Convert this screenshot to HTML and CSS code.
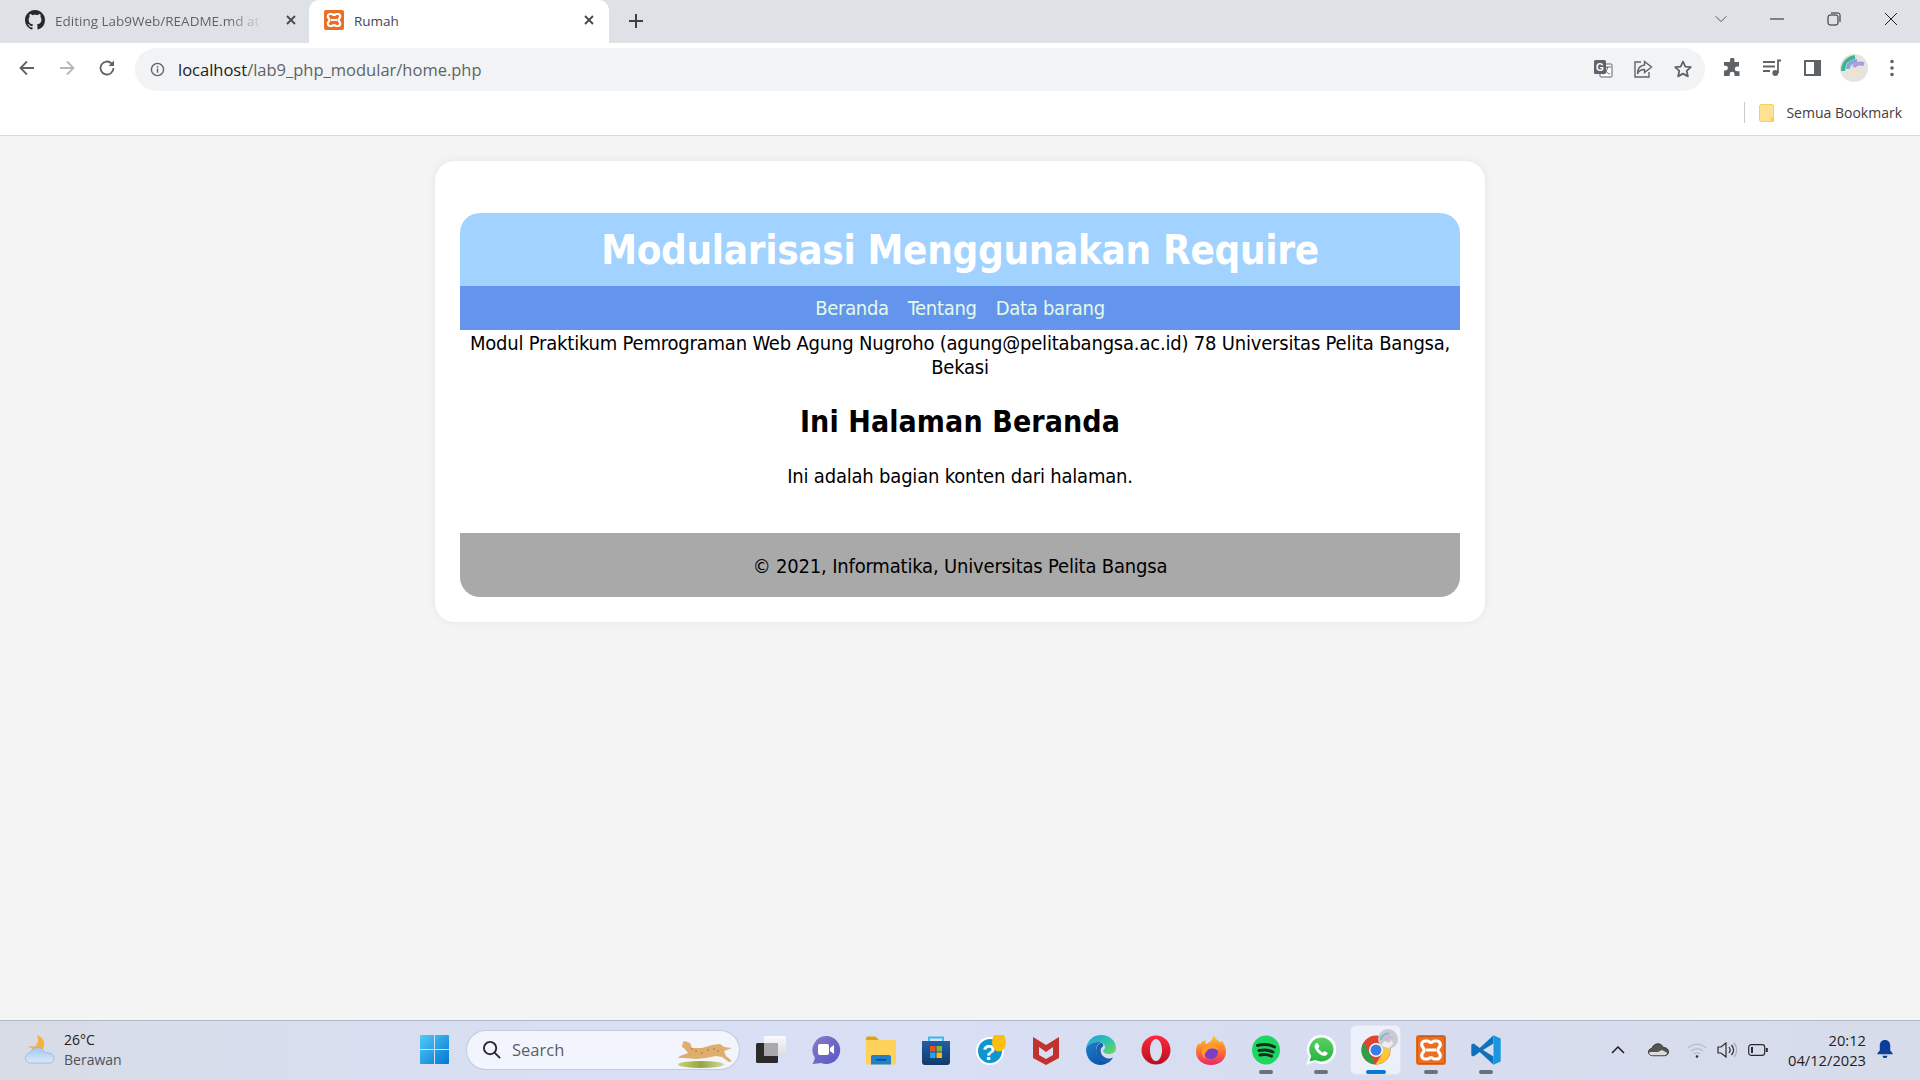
FILE: index.html
```html
<!DOCTYPE html>
<html lang="id">
<head>
  <meta charset="UTF-8">
  <meta name="viewport" content="width=device-width, initial-scale=1.0">
  <title>Rumah</title>
  <link rel="stylesheet" href="styles.css">
</head>
<body>
  <div class="screen">
    <!-- Tab strip -->
    <div class="tabstrip">
      <div class="tab">
        <svg class="favicon" viewBox="0 0 16 16"><path fill="#24292f" d="M8 0C3.58 0 0 3.58 0 8c0 3.54 2.29 6.53 5.47 7.59.4.07.55-.17.55-.38 0-.19-.01-.82-.01-1.49-2.01.37-2.53-.49-2.69-.94-.09-.23-.48-.94-.82-1.13-.28-.15-.68-.52-.01-.53.63-.01 1.08.58 1.23.82.72 1.21 1.87.87 2.33.66.07-.52.28-.87.51-1.07-1.78-.2-3.64-.89-3.64-3.95 0-.87.31-1.59.82-2.15-.08-.2-.36-1.02.08-2.12 0 0 .67-.21 2.2.82.64-.18 1.32-.27 2-.27s1.36.09 2 .27c1.53-1.04 2.2-.82 2.2-.82.44 1.1.16 1.92.08 2.12.51.56.82 1.27.82 2.15 0 3.07-1.87 3.75-3.65 3.95.29.25.54.73.54 1.48 0 1.07-.01 1.93-.01 2.2 0 .21.15.46.55.38A8 8 0 0 0 16 8c0-4.42-3.58-8-8-8z"/></svg>
        <span class="tab-title tab-title-fade">Editing Lab9Web/README.md at</span>
        <svg class="tab-close" viewBox="0 0 12 12"><path d="M2 2l8 8M10 2l-8 8"/></svg>
      </div>
      <div class="tab tab-active">
        <svg class="favicon" viewBox="0 0 20 20"><rect width="20" height="20" rx="2" fill="#ea6f26"/><path fill="none" stroke="#fff" stroke-width="2.2" d="M6 4h1.6c1 0 1.4 1 2.4 1s1.4-1 2.4-1H14c1.5 0 2.2 1.3 2.2 2.5 0 1.5-1.7 2-1.7 3.5s1.7 2 1.7 3.5c0 1.2-.7 2.5-2.2 2.5h-1.6c-1 0-1.4-1-2.4-1s-1.4 1-2.4 1H6c-1.5 0-2.2-1.3-2.2-2.5 0-1.500 1.700-2 1.700-3.500S3.800 8 3.800 6.500C3.800 5.300 4.500 4 6 4zM7 10h6"/></svg>
        <span class="tab-title">Rumah</span>
        <svg class="tab-close" viewBox="0 0 12 12"><path d="M2 2l8 8M10 2l-8 8"/></svg>
      </div>
      <svg class="new-tab" viewBox="0 0 16 16"><path d="M8 1v14M1 8h14"/></svg>
      <div class="window-controls">
        <svg class="win-btn" viewBox="0 0 16 16"><path d="M2 5l6 6 6-6"/></svg>
        <svg class="win-btn" viewBox="0 0 16 16"><path d="M1 8h14"/></svg>
        <svg class="win-btn" viewBox="0 0 16 16"><rect x="2" y="4" width="10" height="10" rx="2"/><path d="M5 2h7c1.5 0 2 1 2 2v7"/></svg>
        <svg class="win-btn" viewBox="0 0 16 16"><path d="M2 2l12 12M14 2L2 14"/></svg>
      </div>
    </div>

    <!-- Address bar -->
    <div class="toolbar">
      <svg class="nav-icon" viewBox="0 0 20 20"><path d="M17 10H4M10 3.5L3.5 10l6.5 6.500"/></svg>
      <svg class="nav-icon nav-disabled" viewBox="0 0 20 20"><path d="M3 10h13M10 3.5l6.500 6.500-6.500 6.500"/></svg>
      <svg class="nav-icon" viewBox="0 0 20 20"><path d="M16.5 10a6.5 6.5 0 1 1-2-4.700L16.500 7.500"/><path class="solid" d="M17 2.5V8h-5.500z"/></svg>
      <div class="omnibox">
        <svg class="info-icon" viewBox="0 0 16 16"><circle cx="8" cy="8" r="6.5"/><path d="M8 7v4.500M8 4.200v1.600"/></svg>
        <span class="url"><span class="url-host">localhost</span>/lab9_php_modular/home.php</span>
        <div class="omni-actions">
          <svg class="tool-icon" viewBox="0 0 20 20"><rect x="7" y="5" width="12" height="13" rx="1" fill="#fff" stroke="#5f6368"/><rect x="1" y="1" width="12" height="14" rx="1.5" fill="#5f6368"/><text x="7" y="12" class="translate-g">G</text><path d="M11 8h7M14.500 8c0 3-2 6-4 7M12 11c1 2 3 3.500 5 4" stroke="#5f6368" stroke-width="1" fill="none"/></svg>
          <svg class="tool-icon" viewBox="0 0 20 20"><path fill="none" stroke="#5f6368" stroke-width="1.4" d="M8 3H2v15h14v-5M11.500 2.500l7 5.500-7 5.500V10.500C7.500 10.500 5.500 12 4.500 15c0-5 2.500-8.500 7-9z"/></svg>
          <svg class="tool-icon" viewBox="0 0 20 20"><path fill="none" stroke="#5f6368" stroke-width="1.8" stroke-linejoin="round" d="M10 2.500l2.300 5.100 5.500.6-4.100 3.700 1.200 5.500L10 14.600l-4.900 2.800 1.200-5.500-4.100-3.700 5.500-.6z"/></svg>
        </div>
      </div>
      <div class="tool-actions">
        <svg class="tool-icon" viewBox="0 0 20 20"><path fill="#5f6368" d="M8 1.500a2.300 2.300 0 0 1 4.500 0V4H17v4.500h-1.800a2.400 2.400 0 0 0 0 4.800H17.500V18h-5v-1.800a2.400 2.400 0 0 0-4.800 0V18H2v-5.500h1.500a2.400 2.400 0 0 0 0-4.800H2V4h6z"/></svg>
        <svg class="tool-icon" viewBox="0 0 20 20"><path fill="none" stroke="#5f6368" stroke-width="1.8" d="M1 4h12M1 8.500h12M1 13h7M16 15V2.500h3"/><circle cx="13.300" cy="15" r="3" fill="#5f6368"/></svg>
        <svg class="tool-icon" viewBox="0 0 20 20"><rect x="2" y="2" width="17" height="16" fill="#5f6368"/><rect x="4" y="4" width="8" height="12" fill="#fff"/></svg>
        <svg class="avatar" viewBox="0 0 28 28">
          <circle cx="14" cy="14" r="14" fill="#e4e4e2"/>
          <path fill="none" stroke="#3fb58f" stroke-width="4" d="M3 17C3 9 8 4 15 3"/>
          <path fill="none" stroke="#86a5e3" stroke-width="4" d="M8 15c0-5 4-8 9-8"/>
          <path fill="none" stroke="#b39bdb" stroke-width="4" d="M14 13c1-3 5-4 10-3"/>
          <path fill="#efe3c9" d="M6 22l4-7 7 1 4-3 1 3-3 3-1 5-3-3-5 1z"/>
        </svg>
        <svg class="tool-icon" viewBox="0 0 20 20"><g fill="#5f6368"><circle cx="10" cy="3.5" r="1.8"/><circle cx="10" cy="10" r="1.8"/><circle cx="10" cy="16.5" r="1.8"/></g></svg>
      </div>
    </div>

    <!-- Bookmark bar -->
    <div class="bookmarks">
      <span class="bm-sep"></span>
      <svg class="bm-folder" viewBox="0 0 15 18"><path fill="#fde293" stroke="#f4cf63" d="M2 .5h11c.8 0 1.500.7 1.500 1.500v15.500H2c-.8 0-1.500-.7-1.500-1.500V2C.5 1.200 1.200.5 2 .5z"/><rect x="11.5" y="13" width="3" height="4.5" rx="1" fill="#fbd251"/></svg>
      <span class="bm-label">Semua Bookmark</span>
    </div>

    <!-- Page -->
    <main class="page">
      <div class="card">
        <header class="site-header">
          <h1>Modularisasi Menggunakan Require</h1>
        </header>
        <nav class="site-nav">
          <a href="#">Beranda</a>
          <a href="#">Tentang</a>
          <a href="#">Data barang</a>
        </nav>
        <p class="intro">Modul Praktikum Pemrograman Web Agung Nugroho (agung@pelitabangsa.ac.id) 78 Universitas Pelita Bangsa, Bekasi</p>
        <section class="content">
          <h2>Ini Halaman Beranda</h2>
          <p>Ini adalah bagian konten dari halaman.</p>
        </section>
        <footer class="site-footer">&copy; 2021, Informatika, Universitas Pelita Bangsa</footer>
      </div>
    </main>

    <!-- Taskbar -->
    <div class="taskbar">
      <div class="weather">
        <svg class="weather-icon" viewBox="0 0 30 30">
          <defs><linearGradient id="cloud" x1="0" y1="0" x2="0" y2="1"><stop offset="0" stop-color="#a3c9f2"/><stop offset="1" stop-color="#dbe8f7"/></linearGradient></defs>
          <path fill="#f4b23e" d="M12 0c6 2 9 8 6 14l-7 2-8-5 7 .5C13 9 14 5 12 0z"/>
          <path fill="url(#cloud)" stroke="#8ab6e8" stroke-width=".8" d="M5 28c-3 0-4.500-2-4.500-5s2-5 4.500-5c1-3.500 4-5.500 7.500-5.500s6 2 7.500 5.500c5-.8 9 1.500 9 5s-2 5-5 5z"/>
        </svg>
        <div class="weather-text">
          <span class="weather-temp">26°C</span>
          <span class="weather-desc">Berawan</span>
        </div>
      </div>

      <div class="task-center">
        <svg class="start-icon" viewBox="0 0 29 29">
          <defs><linearGradient id="winblue" x1="0" y1="0" x2="1" y2="1"><stop offset="0" stop-color="#52cbfa"/><stop offset="1" stop-color="#0377d2"/></linearGradient></defs>
          <path fill="url(#winblue)" d="M1 0h13v14H0V1a1 1 0 0 1 1-1zM15 0h13a1 1 0 0 1 1 1v13H15zM0 15h14v14H1a1 1 0 0 1-1-1zM15 15h14v13a1 1 0 0 1-1 1H15z"/>
        </svg>
        <div class="search-box">
          <svg class="search-icon" viewBox="0 0 20 20"><circle cx="8.5" cy="8.5" r="6.5"/><path d="M13 13l6 6"/></svg>
          <span class="search-text">Search</span>
          <svg class="search-art" viewBox="0 0 58 30">
            <defs><linearGradient id="grass" x1="0" y1="0" x2="1" y2="0"><stop offset="0" stop-color="#c9d27a"/><stop offset=".5" stop-color="#94a63f"/><stop offset="1" stop-color="#d6dba0"/></linearGradient></defs>
            <ellipse cx="23" cy="24.5" rx="23" ry="3.5" fill="url(#grass)"/>
            <path fill="#e0ae6c" d="M5 2l2-1 5 2 2 5 10 0 10-3 8-1 4 3 8 1-8 3 2 5 6 5-3 1-7-5-6-1-10 2-10 1-12-1H0l2-2 8-3-3-4-3-2z"/>
            <g fill="#a5662c"><circle cx="18" cy="11" r=".8"/><circle cx="24" cy="13" r=".8"/><circle cx="30" cy="10" r=".8"/><circle cx="36" cy="9" r=".8"/><circle cx="14" cy="9" r=".8"/><circle cx="40" cy="11" r=".8"/></g>
          </svg>
        </div>

        <div class="task-icon">
          <svg viewBox="0 0 30 30"><defs><linearGradient id="tvw" x1="0" y1="0" x2="0" y2="1"><stop offset="0" stop-color="#fdfdfd"/><stop offset="1" stop-color="#d9dbe2"/></linearGradient></defs><rect x="0" y="8" width="22" height="20" rx="1.5" fill="#2b2b2b"/><rect x="8" y="1" width="22" height="20" rx="1.5" fill="url(#tvw)" opacity=".92"/><rect x="8" y="8" width="14" height="13" fill="#a9a9ab"/></svg>
        </div>
        <div class="task-icon">
          <svg viewBox="0 0 30 30"><defs><linearGradient id="chat" x1="0" y1="0" x2="1" y2="1"><stop offset="0" stop-color="#8a7bc4"/><stop offset="1" stop-color="#5558c8"/></linearGradient></defs><path fill="url(#chat)" d="M15 1a14 14 0 1 1-5 27l-8 1c-1 0 0-1 .5-2l1.500-4A14 14 0 0 1 15 1z"/><rect x="7" y="9" width="11" height="11" rx="2" fill="#fff"/><path fill="#fff" d="M19 13l4-3v9l-4-3z"/></svg>
        </div>
        <div class="task-icon">
          <svg viewBox="0 0 30 30"><path fill="#dca513" d="M0 3a1.500 1.500 0 0 1 1.500-1.500h8L13 5h-13z"/><path fill="#fed25a" d="M0 5h30v23a1.500 1.500 0 0 1-1.500 1.500h-27A1.500 1.500 0 0 1 0 28z"/><path fill="#1f80cc" d="M5 29.500V22a2 2 0 0 1 2-2h16a2 2 0 0 1 2 2v7.500z"/><rect x="10" y="24" width="10" height="1.5" fill="#0a4a85"/></svg>
        </div>
        <div class="task-icon">
          <svg viewBox="0 0 30 30"><defs><linearGradient id="bag" x1="0" y1="0" x2="0" y2="1"><stop offset="0" stop-color="#1f5fa5"/><stop offset="1" stop-color="#123a6b"/></linearGradient></defs><path fill="none" stroke="#35b7ef" stroke-width="1.8" d="M8 7V2.500h14V7"/><path fill="url(#bag)" d="M1 6h28v21a3 3 0 0 1-3 3H4a3 3 0 0 1-3-3z"/><rect x="9" y="11" width="5.5" height="5.5" fill="#e9502b"/><rect x="15.5" y="11" width="5.5" height="5.5" fill="#7cb92b"/><rect x="9" y="17.5" width="5.5" height="5.5" fill="#22a6ea"/><rect x="15.5" y="17.5" width="5.5" height="5.5" fill="#fab612"/></svg>
        </div>
        <div class="task-icon">
          <svg viewBox="0 0 30 30"><circle cx="14" cy="16" r="14" fill="#fff"/><circle cx="14" cy="16" r="12" fill="#0f95cf"/><text x="13" y="25" class="help-mark">?</text><ellipse cx="23" cy="7" rx="7" ry="9.500" fill="#fcbf0f"/></svg>
        </div>
        <div class="task-icon">
          <svg viewBox="0 0 30 30"><path fill="#c1322f" fill-rule="evenodd" d="M2 2l13 8 13-8v21L15 30 2 23zM8 12v8l7 4 7-4v-8l-7 5z"/></svg>
        </div>
        <div class="task-icon">
          <svg viewBox="0 0 30 30"><defs><linearGradient id="edge1" x1="0" y1="0" x2="1" y2="1"><stop offset="0" stop-color="#1aa0e0"/><stop offset=".6" stop-color="#36c9a0"/><stop offset="1" stop-color="#7ad84a"/></linearGradient><linearGradient id="edge2" x1="0" y1="0" x2="1" y2="1"><stop offset="0" stop-color="#1c7fd0"/><stop offset="1" stop-color="#0a4c9c"/></linearGradient></defs><path fill="url(#edge1)" d="M15 0c9 0 15 6 15 13 0 4-3 6-7 6-3 0-6-1-6-3 0-1 2-1 2-4 0-3-3-5-7-5C6 7 1 10 0 14 1 6 7 0 15 0z"/><path fill="url(#edge2)" d="M0 14c1-4 6-7 12-7 2 0 3 .5 3 .5-3 1-5 4-5 8 0 6 5 11 12 11l2-.5C20 29 17 30 15 30 6 30 0 23 0 14z"/><path fill="#1a5fb0" d="M10 16c0-4 2-7 5-8.500 2 .5 3 2.500 2 4-2 1-3 3-2 6 1 4 5 6 9 6l3-1c-2 3.500-4 5-5 5-7 1-12-5-12-11.500z"/></svg>
        </div>
        <div class="task-icon">
          <svg viewBox="0 0 30 30"><defs><linearGradient id="opera" x1="0" y1="0" x2="0" y2="1"><stop offset="0" stop-color="#ff2a3a"/><stop offset="1" stop-color="#b40f1e"/></linearGradient></defs><path fill="url(#opera)" fill-rule="evenodd" d="M15 .5a14.500 14.500 0 1 0 0 29 14.500 14.500 0 0 0 0-29zM15 4c3.500 0 6 5 6 11s-2.500 11-6 11-6-5-6-11 2.500-11 6-11z"/></svg>
        </div>
        <div class="task-icon">
          <svg viewBox="0 0 30 30"><defs><linearGradient id="fox" x1="0" y1="0" x2="0" y2="1"><stop offset="0" stop-color="#ffcb2e"/><stop offset=".5" stop-color="#ff7a2e"/><stop offset="1" stop-color="#e8286b"/></linearGradient></defs><path fill="url(#fox)" d="M18 0c1 3 3 5 6 7l2-1c3 4 4 8 4 11 0 7-6 13-15 13S0 24 0 17c0-4 1-7 3-9l1 2c1-3 3-4 6-5-1 2-1 3 0 4 3-1 6-3 8-9z"/><circle cx="15" cy="17" r="7" fill="#7b3fc6"/><path fill="#ff9a2e" d="M6 13c3-3 8-4 12-3l5 4-2 1c-3-2-8-2-10 1-2 2-3 4-2 8-3-3-4-7-3-11z"/></svg>
        </div>
        <div class="task-icon">
          <svg viewBox="0 0 30 30"><ellipse cx="15" cy="15" rx="14" ry="14.5" fill="#1ed760"/><path fill="none" stroke="#1a2b1f" stroke-width="3" stroke-linecap="round" d="M6.500 10.500c6-1.500 12-1 17 1.500M8 15.500c5-1 10-.5 14 1.500M9 20c4-.8 8-.4 11.500 1.200"/></svg>
          <span class="task-dot"></span>
        </div>
        <div class="task-icon">
          <svg viewBox="0 0 30 30"><defs><linearGradient id="wa" x1="0" y1="0" x2="0" y2="1"><stop offset="0" stop-color="#5bd066"/><stop offset="1" stop-color="#27b43e"/></linearGradient></defs><path fill="#fff" d="M15.500 0a14.500 14.500 0 1 1-7 27L0 30l3-8A14.500 14.500 0 0 1 15.500 0z"/><path fill="url(#wa)" d="M15.500 2.500a12 12 0 1 1-6 22.400L3.500 26.500l1.700-5.600A12 12 0 0 1 15.500 2.500z"/><path fill="#fff" d="M11 8c.7 0 1 .2 1.300.9l1 2.400c.1.500-.6 1.400-1 1.900.8 1.800 2.700 3.600 4.500 4.300.7-.7 1.400-1.500 1.900-1.300l2.500 1.200c.5.300.5 1-.1 2-.7 1-2 1.500-3.500 1.300C14 20 9.500 15.700 8.700 12.400 8.200 10.300 9.700 8 11 8z"/></svg>
          <span class="task-dot"></span>
        </div>
        <div class="task-icon task-icon-active">
          <svg class="chrome-icon" viewBox="0 0 30 30"><circle cx="15" cy="15" r="14.5" fill="#e1442f"/><path fill="#2e9e49" d="M2.500 7.500 9 19l5.500 10.500A14.500 14.500 0 0 1 2.500 7.500z"/><path fill="#fcc934" d="M15 9h13a14.500 14.500 0 0 1-13.500 20.500L21 19a7 7 0 0 0-1-6z"/><circle cx="15" cy="15" r="7" fill="#fff"/><circle cx="15" cy="15" r="5.5" fill="#3b7ce8"/><circle cx="27" cy="4" r="10" fill="#c9cbce"/><path fill="none" stroke="#8fb8d4" stroke-width="2.500" d="M20 5c0-4 4-7 8-6"/><path fill="none" stroke="#d0b5dc" stroke-width="2.500" d="M24 6c0-3 4-5 8-3"/><path fill="#efeee9" d="M20 10l4-4 4 2 3-3 1 4-4 4-4-1z"/></svg>
          <span class="task-dot task-dot-active"></span>
        </div>
        <div class="task-icon">
          <svg viewBox="0 0 30 30"><rect width="30" height="30" rx="3" fill="#e96f24"/><rect x="1.5" y="1.5" width="27" height="27" rx="2" fill="none" stroke="#c85a18"/><path fill="none" stroke="#fff" stroke-width="3.2" d="M9 6h2.500c1.500 0 2 1.500 3.500 1.500s2-1.500 3.500-1.500H21c2.200 0 3.300 2 3.300 3.800 0 2.200-2.500 3-2.500 5.200s2.500 3 2.500 5.200c0 1.800-1.100 3.800-3.300 3.800h-2.500c-1.500 0-2-1.500-3.500-1.500s-2 1.500-3.500 1.500H9c-2.200 0-3.300-2-3.300-3.800 0-2.200 2.500-3 2.500-5.200s-2.500-3-2.500-5.200C5.700 8 6.800 6 9 6zM10 15h10"/></svg>
          <span class="task-dot"></span>
        </div>
        <div class="task-icon">
          <svg viewBox="0 0 100 100"><path fill="#0e72bd" d="M75 1 29 43 9 28 1 32v36l8 4 20-15 46 42V72L40 50l35-22z"/><path fill="#1c95e0" d="M75 1l24 11v76L75 99z"/></svg>
          <span class="task-dot"></span>
        </div>
      </div>

      <div class="tray">
        <svg class="tray-chevron" viewBox="0 0 14 8"><path d="M1 7l6-6 6 6"/></svg>
        <svg class="tray-cloud" viewBox="0 0 22 14"><path fill="#555" stroke="#333" d="M5 13C2 13 .5 11 .5 9s1.500-3.500 3.500-3.500C5 2.500 7.500 .5 10.500.5c3 0 5 2 5.500 4 3-.3 5.500 1.500 5.500 4.300 0 2.500-2 4.200-4.500 4.200z"/><path fill="#dcdcdc" d="M3 12.500c-1.500-1-2-2-1.500-3.500h9l4-2 5.500 3c0 1.500-1.500 2.500-3 2.500z"/></svg>
        <svg class="tray-wifi" viewBox="0 0 20 16"><path d="M1 6c5-5 13-5 18 0M4 9c3.500-3 8.500-3 12 0M7 12c1.800-1.500 4.200-1.500 6 0"/><circle cx="10" cy="14.5" r="1.3"/></svg>
        <svg class="tray-sound" viewBox="0 0 20 16"><path class="sound-body" d="M1 5h3l5-4v14l-5-4H1z"/><path class="sound-body" d="M12 5c1.500 2 1.500 4 0 6M14.500 3c2.500 3 2.500 7 0 10"/><path class="sound-off" d="M17 1c3.500 4 3.500 10 0 14"/></svg>
        <svg class="tray-battery" viewBox="0 0 20 12"><rect x=".7" y=".7" width="16" height="10.600" rx="2.500"/><rect x="3" y="3" width="2" height="6" class="battery-fill"/><rect x="17.800" y="4" width="2" height="4" class="battery-fill"/></svg>
        <div class="clock">
          <span>20:12</span>
          <span>04/12/2023</span>
        </div>
        <svg class="tray-bell" viewBox="0 0 16 20"><path fill="#0a3f9c" d="M8 0c3.500 0 5.500 2.500 5.500 6v5l2.500 3v1H0v-1l2.500-3V6C2.500 2.500 4.500 0 8 0z"/><path fill="#0a3f9c" d="M5.500 16.500h5c0 1.500-1 2.500-2.500 2.500s-2.500-1-2.500-2.500z"/></svg>
      </div>
    </div>
  </div>
</body>
</html>
```

FILE: styles.css
```css
* {
  box-sizing: border-box;
}
body {
  margin: 0;
  font-family: "Open Sans", "Noto Sans", sans-serif;
  color: #202124;
}
.screen {
  width: 1920px;
  height: 1080px;
  display: flex;
  flex-direction: column;
  overflow: hidden;
}

/* Tabs */
.tabstrip {
  height: 43px;
  background: #dee1e6;
  display: flex;
  align-items: stretch;
}
.tab {
  width: 309px;
  display: flex;
  align-items: center;
  padding: 0 12px 3px 25px;
}
.tab-active {
  width: 300px;
  padding: 0 14px 3px 15px;
  background: #fff;
  border-radius: 10px 10px 0 0;
}
.favicon {
  width: 20px;
  height: 20px;
  flex: none;
}
.tab-title {
  flex: 1;
  margin-left: 10px;
  padding-top: 2px;
  font-size: 13.5px;
  white-space: nowrap;
  overflow: hidden;
  color: #45484d;
}
.tab-title-fade {
  color: transparent;
  background: linear-gradient(to right, #5b5e63 78%, #dee1e6 95%);
  -webkit-background-clip: text;
  background-clip: text;
}
.tab-close {
  width: 12px;
  height: 12px;
  margin-left: 10px;
  flex: none;
  fill: none;
  stroke: #45484d;
  stroke-width: 1.8;
}
.new-tab {
  width: 16px;
  height: 16px;
  margin: 13px 0 0 19px;
  fill: none;
  stroke: #3c4043;
  stroke-width: 2;
}
.window-controls {
  margin-left: auto;
  display: flex;
  align-items: flex-start;
  padding: 11px 21px 0 0;
  gap: 41px;
}
.win-btn {
  width: 16px;
  height: 16px;
  fill: none;
  stroke: #202124;
  stroke-width: 1;
}
.win-btn:first-child {
  width: 14px;
  stroke: #3c4043;
}

/* Toolbar */
.toolbar {
  height: 49px;
  background: #fff;
  display: flex;
  align-items: center;
  padding: 0 13px 0 17px;
}
.nav-icon {
  width: 20px;
  height: 20px;
  margin-right: 20px;
  fill: none;
  stroke: #5f6368;
  stroke-width: 1.8;
}
.nav-icon:nth-of-type(3) {
  margin-right: 17px;
}
.nav-disabled {
  stroke: #b5b7ba;
}
.solid {
  fill: #5f6368;
  stroke: none;
}
.omnibox {
  width: 1570px;
  height: 43px;
  margin-top: 3px;
  margin-left: 1px;
  border-radius: 22px;
  background: #f1f3f4;
  display: flex;
  align-items: center;
  padding: 0 12px 0 15px;
}
.info-icon {
  width: 15px;
  height: 15px;
  fill: none;
  stroke: #5f6368;
  stroke-width: 1.5;
}
.url {
  margin-left: 13px;
  font-size: 16.5px;
  color: #5f6368;
}
.url-host {
  color: #202124;
}
.omni-actions {
  margin-left: auto;
  display: flex;
  gap: 20px;
}
.tool-icon {
  width: 20px;
  height: 20px;
}
.translate-g {
  font: bold 10px "Liberation Sans", sans-serif;
  fill: #fff;
  text-anchor: middle;
}
.tool-actions {
  margin-left: 17px;
  display: flex;
  align-items: center;
  gap: 20px;
}
.avatar {
  width: 28px;
  height: 28px;
  margin: 0 -6px 0 -2px;
}

/* Bookmarks */
.bookmarks {
  height: 44px;
  background: #fff;
  border-bottom: 1px solid #d9d9d9;
  display: flex;
  align-items: center;
  padding: 0 18px 2px 0;
  justify-content: flex-end;
}
.bm-sep {
  width: 1px;
  height: 21px;
  background: #c8c9cb;
  margin-right: 14px;
}
.bm-folder {
  width: 15px;
  height: 18px;
  margin-right: 12px;
}
.bm-label {
  font-size: 14px;
  color: #3c4043;
}

/* Page content */
.page {
  flex: 1;
  background: #f4f4f4;
  padding-top: 25px;
  font-family: "DejaVu Sans Condensed", "DejaVu Sans", sans-serif;
  color: #000;
}
.card {
  width: 1050px;
  margin: 0 auto;
  padding: 52px 25px 25px;
  background: #fff;
  border-radius: 20px;
  box-shadow: 0 0 10px rgba(0, 0, 0, 0.06);
}
.site-header {
  height: 73px;
  background: #a2d2ff;
  border-radius: 20px 20px 0 0;
  display: flex;
  align-items: center;
  justify-content: center;
}
.site-header h1 {
  margin: 0;
  font-size: 40px;
  font-weight: bold;
  letter-spacing: -0.32px;
  color: #fff;
}
.site-nav {
  height: 44px;
  background: #6495ed;
  display: flex;
  align-items: center;
  justify-content: center;
  gap: 19px;
}
.site-nav a {
  font-size: 20px;
  letter-spacing: -0.3px;
  color: #e4fbe9;
  text-decoration: none;
}
.intro {
  margin: 0;
  padding-top: 1px;
  font-size: 20px;
  line-height: 24px;
  letter-spacing: -0.2px;
  text-align: center;
}
.content {
  text-align: center;
  height: 154px;
  padding-top: 25px;
}
.content h2 {
  margin: 0;
  font-size: 30px;
  line-height: 36px;
  font-weight: bold;
  letter-spacing: 0.1px;
}
.content p {
  margin: 24px 0 0;
  font-size: 20px;
  line-height: 24px;
  letter-spacing: -0.2px;
}
.site-footer {
  height: 64px;
  padding-top: 2px;
  background: #a9a9a9;
  border-radius: 0 0 20px 20px;
  display: flex;
  align-items: center;
  justify-content: center;
  font-size: 20px;
  letter-spacing: -0.18px;
}

/* Taskbar */
.taskbar {
  height: 60px;
  border-top: 1px solid #b5b9c8;
  padding-bottom: 2px;
  background: linear-gradient(to right, #d7dce6 0%, #d9e0f6 33%, #d8def2 60%, #d6dcea 100%);
  display: flex;
  align-items: center;
}
.weather {
  width: 420px;
  padding-left: 25px;
  display: flex;
  align-items: center;
  gap: 9px;
}
.weather-icon {
  width: 30px;
  height: 30px;
}
.weather-text {
  display: flex;
  flex-direction: column;
  font-size: 14px;
  line-height: 20px;
}
.weather-desc {
  color: #4e5258;
}
.task-center {
  display: flex;
  align-items: center;
}
.start-icon {
  width: 29px;
  height: 29px;
}
.search-box {
  width: 272px;
  height: 38px;
  margin: 0 4px 0 18px;
  padding: 0 0 0 15px;
  border-radius: 19px;
  background: #f2f5fe;
  box-shadow: 0 0 0 1px #c5cadb;
  display: flex;
  align-items: center;
  overflow: hidden;
}
.search-icon {
  width: 19px;
  height: 19px;
  fill: none;
  stroke: #2a2a2e;
  stroke-width: 2;
}
.search-text {
  margin-left: 11px;
  font-size: 16.5px;
  color: #5b5e66;
}
.search-art {
  width: 58px;
  height: 30px;
  margin: 10px 3px 0 auto;
}
.task-icon {
  width: 55px;
  height: 48px;
  position: relative;
  display: flex;
  align-items: center;
  justify-content: center;
}
.task-icon svg {
  width: 30px;
  height: 30px;
}
.help-mark {
  font: bold 22px "Liberation Sans", sans-serif;
  fill: #fff;
  text-anchor: middle;
}
.task-icon-active::before {
  content: "";
  position: absolute;
  inset: 0 3px;
  background: #ecf0fa;
  border-radius: 5px;
  box-shadow: 0 0 0 1px #e1e5f2;
}
.task-icon-active svg {
  position: relative;
  overflow: visible;
}
.task-dot {
  position: absolute;
  bottom: 0;
  left: 21px;
  width: 14px;
  height: 4px;
  background: #6e7179;
  border-radius: 2px;
}
.task-dot-active {
  left: 18px;
  width: 20px;
  background: #0a78d4;
}
.tray {
  margin-left: auto;
  display: flex;
  align-items: center;
  padding-right: 27px;
  height: 100%;
}
.tray-chevron {
  width: 14px;
  height: 8px;
  fill: none;
  stroke: #1e1e1e;
  stroke-width: 1.5;
}
.tray-cloud {
  width: 21px;
  height: 14px;
  margin-left: 23px;
}
.tray-wifi {
  width: 20px;
  height: 16px;
  margin-left: 18px;
  fill: none;
  stroke: #b4b8c4;
  stroke-width: 1.2;
}
.tray-wifi circle {
  fill: #333;
  stroke: none;
}
.tray-sound {
  width: 20px;
  height: 16px;
  margin-left: 10px;
  fill: none;
  stroke-width: 1.2;
}
.sound-body {
  stroke: #2c2c2e;
}
.sound-off {
  stroke: #a9adb8;
}
.tray-battery {
  width: 20px;
  height: 12px;
  margin-left: 11px;
  fill: none;
  stroke: #2c2c2e;
  stroke-width: 1.2;
}
.battery-fill {
  fill: #2c2c2e;
  stroke: none;
}
.clock {
  margin-left: 20px;
  display: flex;
  flex-direction: column;
  align-items: flex-end;
  font-size: 14.7px;
  line-height: 20px;
  color: #202124;
}
.tray-bell {
  width: 16px;
  height: 19px;
  margin-left: 11px;
}
```
